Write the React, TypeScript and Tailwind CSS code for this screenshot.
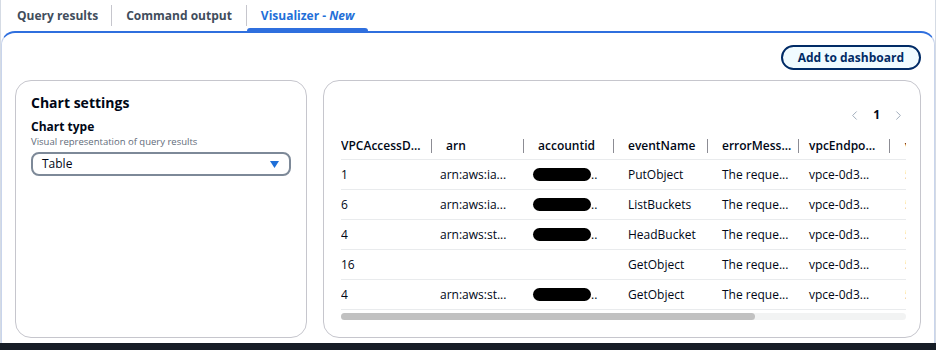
import { ChevronLeft, ChevronRight } from "lucide-react";

const COLS = [
  { name: "VPCAccessD...", w: 99, hp: 0, sep: 8 },
  { name: "arn", w: 93, hp: 6, sep: 9 },
  { name: "accountid", w: 95, hp: 5, sep: 14 },
  { name: "eventName", w: 94, hp: 0, sep: 14 },
  { name: "errorMess...", w: 87, hp: 0, sep: 10 },
  { name: "vpcEndpo...", w: 96, hp: 0, sep: 15 },
  { name: "vpceId", w: 60, hp: 0, sep: -1 },
];

const ROWS = [
  { id: "1", arn: "arn:aws:ia...", acct: true, ev: "PutObject" },
  { id: "6", arn: "arn:aws:ia...", acct: true, ev: "ListBuckets" },
  { id: "4", arn: "arn:aws:st...", acct: true, ev: "HeadBucket" },
  { id: "16", arn: "", acct: false, ev: "GetObject" },
  { id: "4", arn: "arn:aws:st...", acct: true, ev: "GetObject" },
];

function Redacted() {
  return (
    <span className="flex items-center">
      <span className="h-[13px] w-[58px] rounded-full bg-black" />
      <span>..</span>
    </span>
  );
}

function Tabs() {
  return (
    <div className="flex h-[31px] items-stretch text-[12px] font-bold text-[#414d5c]">
      <div className="flex items-center pl-[16px] pr-[13px]">Query results</div>
      <div className="my-[5px] w-px bg-[#c6c6cd]" />
      <div className="flex items-center px-[14px]">Command output</div>
      <div className="my-[5px] w-px bg-[#c6c6cd]" />
      <div className="relative flex items-center px-[14px] text-[#1f6fd8]">
        <span>
          Visualizer - <i>New</i>
        </span>
        <div className="absolute bottom-0 left-0 right-0 h-[3px] rounded-t-sm bg-[#2f6fde]" />
      </div>
    </div>
  );
}

function ChartSettings() {
  return (
    <div className="w-[292px] shrink-0 rounded-[16px] border border-[#c6c6cd] px-[15px] pt-[12px]">
      <h2 className="text-[14px] font-bold leading-[20px] text-[#000716]">Chart settings</h2>
      <p className="mt-[6px] text-[12px] font-bold leading-[16px] text-[#000716]">Chart type</p>
      <p className="text-[9.5px] leading-[13px] text-[#5f6b7a]">Visual representation of query results</p>
      <div className="mt-[4px] flex h-[24px] items-center justify-between rounded-[8px] border-2 border-[#7d8998] pl-[9px] pr-[10px] text-[12px] text-[#000716]">
        <span>Table</span>
        <svg width="9" height="7" viewBox="0 0 9 7">
          <path d="M0 0 H9 L4.5 7 Z" fill="#1f6fd8" />
        </svg>
      </div>
    </div>
  );
}

function ResultsTable() {
  return (
    <div className="min-w-0 flex-1 rounded-[16px] border border-[#c6c6cd] pl-[17px] pr-[14px] pt-[24px]">
      <div className="flex h-[20px] items-center justify-end gap-[8px] text-[12px] font-bold text-[#000716]">
        <ChevronLeft size={15} strokeWidth={1.5} className="text-[#9ba7b6]" />
        <span className="px-[3px]">1</span>
        <ChevronRight size={15} strokeWidth={1.5} className="text-[#9ba7b6]" />
      </div>
      <div className="mt-[7px] overflow-hidden text-[12px] text-[#000716]">
        <div className="flex h-[28px] w-max min-w-full items-center border-b border-[#e9ebed] font-semibold">
          {COLS.map((c) => (
            <div key={c.name} className="flex shrink-0 items-center" style={{ width: c.w }}>
              <span className="whitespace-nowrap" style={{ paddingLeft: c.hp }}>
                {c.name}
              </span>
              {c.sep >= 0 && (
                <div className="ml-auto h-[14px] w-px bg-[#8c8c94]" style={{ marginRight: c.sep }} />
              )}
            </div>
          ))}
        </div>
        {ROWS.map((r, i) => (
          <div key={i} className="flex h-[30px] w-max min-w-full items-center border-b border-[#e9ebed]">
            <div className="w-[99px] shrink-0">{r.id}</div>
            <div className="w-[93px] shrink-0 whitespace-nowrap">{r.arn}</div>
            <div className="w-[95px] shrink-0">{r.acct && <Redacted />}</div>
            <div className="w-[94px] shrink-0">{r.ev}</div>
            <div className="w-[87px] shrink-0 whitespace-nowrap">The reque...</div>
            <div className="w-[96px] shrink-0 whitespace-nowrap">vpce-0d3...</div>
            <div className="w-[60px] shrink-0">5...</div>
          </div>
        ))}
        <div className="mt-[3px] h-[7px] rounded-full bg-[#f2f3f3]">
          <div className="h-full w-[414px] rounded-full bg-[#c1c1c1]" />
        </div>
      </div>
    </div>
  );
}

export default function App() {
  return (
    <div className="flex h-[350px] w-[936px] flex-col bg-white font-['Open_Sans',sans-serif]">
      <div className="flex flex-1 flex-col border-x border-[#d5dbe4]">
        <Tabs />
        <div className="flex flex-1 flex-col rounded-t-[14px] border-x border-t-2 border-x-[#c9d5ec] border-t-[#2f6fde] px-[13px] pt-[12px]">
          <div className="flex justify-end">
            <button className="h-[25px] rounded-full border-2 border-[#002b66] bg-[#f0fbff] px-[15px] text-[12px] font-bold text-[#002b66]">
              Add to dashboard
            </button>
          </div>
          <div className="mt-[10px] flex h-[258px] gap-[16px]">
            <ChartSettings />
            <ResultsTable />
          </div>
        </div>
      </div>
      <div className="h-[7px] bg-[#161d26]" />
    </div>
  );
}
